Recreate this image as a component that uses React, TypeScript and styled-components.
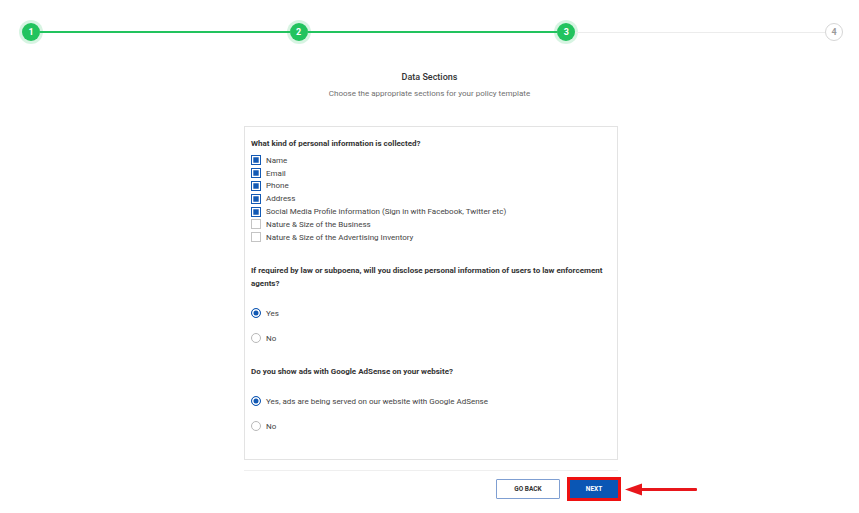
import styled, { createGlobalStyle } from "styled-components";

const GlobalStyle = createGlobalStyle`
  body {
    margin: 0;
    background: #ffffff;
    font-family: Roboto, "Liberation Sans", sans-serif;
    color: #333;
  }
`;

interface IStepProps {
  done: boolean;
}

const Page = styled.div`
  width: 859px;
  min-height: 513px;
`;

const Stepper = styled.div`
  display: flex;
  align-items: center;
  padding: 23px 16px 0 22px;
`;

const StepCircle = styled.div<IStepProps>`
  width: 18px;
  height: 18px;
  border-radius: 50%;
  box-sizing: border-box;
  display: flex;
  align-items: center;
  justify-content: center;
  font-size: 9px;
  font-weight: 700;
  flex-shrink: 0;
  color: ${(p) => (p.done ? "#fff" : "#9a9a9a")};
  background: ${(p) => (p.done ? "#22c35e" : "#fff")};
  border: ${(p) => (p.done ? "none" : "1px solid #d6d6d6")};
  box-shadow: ${(p) => (p.done ? "0 0 0 3px rgba(34, 195, 94, 0.18)" : "none")};
`;

const StepLine = styled.div<IStepProps>`
  flex: 1;
  height: ${(p) => (p.done ? "1.5px" : "1px")};
  background: ${(p) => (p.done ? "#22c35e" : "#ececec")};
`;

const Heading = styled.div`
  text-align: center;
  margin-top: 29px;
`;

const Title = styled.h2`
  margin: 0;
  font-size: 9px;
  font-weight: 500;
  line-height: 14px;
  color: #333;
`;

const Subtitle = styled.p`
  margin: 4px 0 0;
  font-size: 8px;
  line-height: 12px;
  color: #6f6f6f;
`;

const Content = styled.div`
  width: 374px;
  margin: 26px 0 0 244px;
`;

const Card = styled.div`
  border: 1px solid #e3e3e3;
  padding: 10px 6px 20px;
`;

const Section = styled.div<{ gap: number }>`
  margin-top: ${(p) => p.gap}px;
`;

const Question = styled.div`
  font-size: 8px;
  font-weight: 700;
  line-height: 13px;
  color: #333;
`;

const CheckList = styled.div`
  margin-top: 4px;
`;

const OptionRow = styled.label<{ h: number }>`
  display: flex;
  align-items: center;
  height: ${(p) => p.h}px;
  font-size: 8px;
  color: #444;
  gap: 5px;
`;

const Box = styled.span<{ checked: boolean }>`
  width: 10px;
  height: 10px;
  box-sizing: border-box;
  flex-shrink: 0;
  border: ${(p) => (p.checked ? "1.5px solid #1259b4" : "1px solid #c4c4c4")};
  background: ${(p) => (p.checked ? "#1259b4" : "#fff")};
  box-shadow: ${(p) => (p.checked ? "inset 0 0 0 1.3px #fff" : "none")};
`;

const Radio = styled.span<{ checked: boolean }>`
  width: 10px;
  height: 10px;
  border-radius: 50%;
  box-sizing: border-box;
  flex-shrink: 0;
  border: ${(p) => (p.checked ? "1.3px solid #1259b4" : "1px solid #b8b8b8")};
  background: ${(p) => (p.checked ? "#1259b4" : "#fff")};
  box-shadow: ${(p) => (p.checked ? "inset 0 0 0 1.5px #fff" : "none")};
`;

const RadioList = styled.div`
  margin-top: 11px;
`;

const Divider = styled.div`
  height: 1px;
  background: #efefef;
  margin-top: 10px;
`;

const Actions = styled.div`
  display: flex;
  justify-content: flex-end;
  align-items: center;
  gap: 10px;
  margin-top: 8px;
`;

const BackButton = styled.button`
  width: 64px;
  height: 20px;
  box-sizing: border-box;
  border: 1px solid #7f9fd2;
  border-radius: 1px;
  background: #fff;
  color: #333;
  font-family: Roboto, "Liberation Sans", sans-serif;
  font-size: 6.5px;
  font-weight: 700;
  padding: 0;
`;

const NextWrap = styled.div`
  position: relative;
`;

const NextButton = styled.button`
  display: block;
  width: 48px;
  height: 18px;
  border: none;
  background: #0a56b4;
  color: #fff;
  font-family: Roboto, "Liberation Sans", sans-serif;
  font-size: 6.5px;
  font-weight: 700;
  padding: 0;
  outline: 3px solid #ee1111;
  outline-offset: 0;
`;

const Arrow = styled.svg`
  position: absolute;
  left: 55px;
  top: 3px;
`;

const checks = [
  { label: "Name", checked: true },
  { label: "Email", checked: true },
  { label: "Phone", checked: true },
  { label: "Address", checked: true },
  { label: "Social Media Profile information (Sign in with Facebook, Twitter etc)", checked: true },
  { label: "Nature & Size of the Business", checked: false },
  { label: "Nature & Size of the Advertising Inventory", checked: false },
];

const steps = [1, 2, 3, 4];

const App = () => {
  return (
    <Page>
      <GlobalStyle />
      <Stepper>
        {steps.map((n, i) => (
          <>
            <StepCircle key={`c${n}`} done={n <= 3}>
              {n}
            </StepCircle>
            {i < steps.length - 1 && <StepLine key={`l${n}`} done={n < 3} />}
          </>
        ))}
      </Stepper>

      <Heading>
        <Title>Data Sections</Title>
        <Subtitle>Choose the appropriate sections for your policy template</Subtitle>
      </Heading>

      <Content>
        <Card>
          <Question>What kind of personal information is collected?</Question>
          <CheckList>
            {checks.map((c) => (
              <OptionRow key={c.label} h={12.8}>
                <Box checked={c.checked} />
                {c.label}
              </OptionRow>
            ))}
          </CheckList>

          <Section gap={20}>
            <Question>
              If required by law or subpoena, will you disclose personal information of users to law enforcement
              agents?
            </Question>
            <RadioList>
              <OptionRow h={25}>
                <Radio checked={true} />
                Yes
              </OptionRow>
              <OptionRow h={25}>
                <Radio checked={false} />
                No
              </OptionRow>
            </RadioList>
          </Section>

          <Section gap={14}>
            <Question>Do you show ads with Google AdSense on your website?</Question>
            <RadioList>
              <OptionRow h={25}>
                <Radio checked={true} />
                Yes, ads are being served on our website with Google AdSense
              </OptionRow>
              <OptionRow h={25}>
                <Radio checked={false} />
                No
              </OptionRow>
            </RadioList>
          </Section>
        </Card>

        <Divider />

        <Actions>
          <BackButton>GO BACK</BackButton>
          <NextWrap>
            <NextButton>NEXT</NextButton>
            <Arrow width="75" height="14" viewBox="0 0 75 14">
              <polygon points="0,6.5 17,0.5 17,12.5" fill="#e8161b" />
              <rect x="16" y="5" width="56" height="3" rx="1" fill="#e8161b" />
            </Arrow>
          </NextWrap>
        </Actions>
      </Content>
    </Page>
  );
};

export default App;
